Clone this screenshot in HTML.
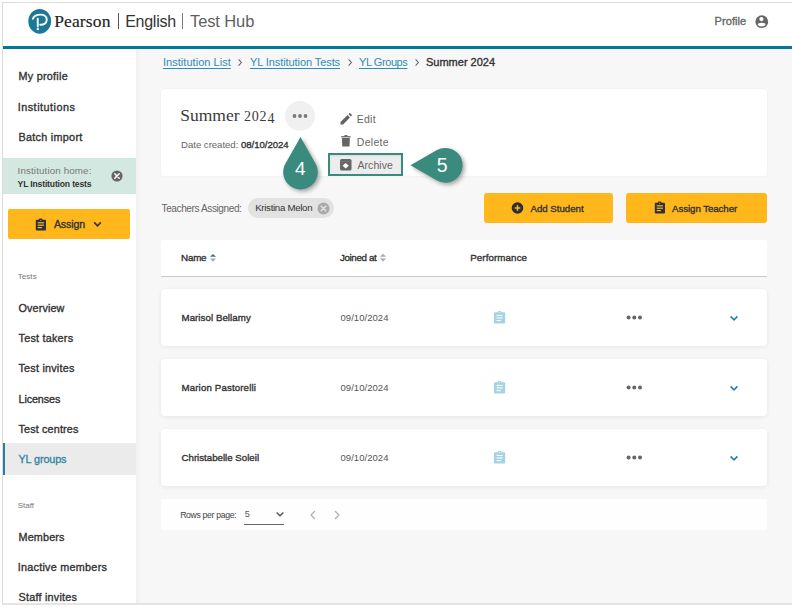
<!DOCTYPE html>
<html><head><meta charset="utf-8">
<style>
*{margin:0;padding:0;box-sizing:border-box}
html,body{width:792px;height:613px;overflow:hidden;background:#fff;font-family:"Liberation Sans",sans-serif;position:relative}
.a{position:absolute;white-space:nowrap}
.t{position:absolute;white-space:nowrap;line-height:1}
.card{position:absolute;background:#fff;border-radius:3px}
.row{position:absolute;left:161px;width:606px;height:57px;background:#fff;border-radius:4px;box-shadow:0 1px 4px rgba(20,20,70,0.08)}
</style></head><body>

<div class="a" style="left:2px;top:2px;width:800px;height:603px;border-left:1px solid #dcdcdc;border-top:1px solid #dcdcdc;border-bottom:2px solid #e4e4e4;background:#fff"></div>
<!-- header -->
<div class="a" style="left:3px;top:46px;width:800px;height:3px;background:#05789a"></div>
<div class="a" style="left:3px;top:49px;width:133px;height:554px;background:#fff"></div>
<div class="a" style="left:136px;top:49px;width:660px;height:554px;background:#f7f7f7"></div>
<div class="a" style="left:136px;top:49px;width:5px;height:554px;background:linear-gradient(90deg,#f0f0f0,#f7f7f7)"></div>

<!-- logo -->
<svg class="a" style="left:27px;top:8px" width="26" height="27" viewBox="0 0 26 27">
<ellipse cx="12.7" cy="13.3" rx="11.4" ry="12.4" fill="#1b7896"/>
<path d="M5.9 10.8 C7.5 5.6 19.8 4.6 19.8 11.5 C19.8 15.8 15.6 17.2 13.2 16.6" fill="none" stroke="#fff" stroke-width="1.9" stroke-linecap="round"/>
<path d="M10.7 10.6 L10.8 18.6" stroke="#fff" stroke-width="1.9" stroke-linecap="round"/>
<circle cx="10.8" cy="21.1" r="1.2" fill="#fff"/>
</svg>
<div class="a" style="left:118px;top:13px;width:1px;height:16px;background:#555"></div>
<div class="a" style="left:182px;top:13px;width:1px;height:16px;background:#777"></div>

<svg class="a" style="left:755px;top:15px" width="14" height="14" viewBox="0 0 14 14">
<circle cx="6.8" cy="6.7" r="6.4" fill="#666"/>
<circle cx="6.4" cy="4.1" r="2.1" fill="#fff"/>
<ellipse cx="6.6" cy="9.6" rx="3.8" ry="1.8" fill="#fff"/>
</svg>


<!-- sidebar -->
<div class="a" style="left:3px;top:158px;width:133px;height:36px;background:#d4e8e2"></div>
<svg class="a" style="left:111px;top:170px" width="12" height="12" viewBox="0 0 12 12">
<circle cx="6" cy="6" r="5.6" fill="#666"/>
<path d="M3.8 3.8 L8.2 8.2 M8.2 3.8 L3.8 8.2" stroke="#fff" stroke-width="1.5" stroke-linecap="round"/>
</svg>
<div class="a" style="left:8px;top:209px;width:122px;height:30px;background:#ffb71b;border-radius:2px"></div>
<svg class="a" style="left:35px;top:217.5px" width="12" height="13" viewBox="0 0 12 13">
<rect x="0.8" y="1.8" width="10.2" height="10.6" rx="0.9" fill="#2e3140"/>
<rect x="3.9" y="0.4" width="3.6" height="2.6" rx="1" fill="#2e3140"/>
<circle cx="5.7" cy="2.2" r="0.55" fill="#ffb71b"/>
<rect x="2.7" y="4.2" width="6.2" height="1.2" fill="#ffb71b"/>
<rect x="2.7" y="6.6" width="6.2" height="1.2" fill="#ffb71b"/>
<rect x="2.7" y="9.0" width="4.2" height="1.2" fill="#ffb71b"/>
</svg>
<svg class="a" style="left:93px;top:221px" width="9" height="7" viewBox="0 0 9 7">
<path d="M1.2 1.4 L4.5 4.8 L7.8 1.4" fill="none" stroke="#333" stroke-width="1.6"/>
</svg>
<div class="a" style="left:3px;top:443px;width:133px;height:32px;background:#ebebeb"></div>
<div class="a" style="left:3px;top:443px;width:2px;height:32px;background:#2a7d9c"></div>

<!-- breadcrumb -->

<!-- title card -->
<div class="card" style="left:161px;top:88.5px;width:606px;height:87.5px;box-shadow:0 0 3px rgba(20,20,70,0.05)"></div>
<div class="a" style="left:285px;top:101px;width:30px;height:30px;border-radius:50%;background:#f0f0f0"></div>
<svg class="a" style="left:291px;top:113px" width="18" height="6" viewBox="0 0 18 6">
<circle cx="3.5" cy="3" r="1.9" fill="#777"/><circle cx="9" cy="3" r="1.9" fill="#777"/><circle cx="14.5" cy="3" r="1.9" fill="#777"/>
</svg>

<svg class="a" style="left:340px;top:112.7px" width="12" height="12" viewBox="0 0 12 12">
<path d="M0.5 9 L0.5 11.5 L3 11.5 L10 4.5 L7.5 2 Z M8.4 1.1 L10.9 3.6 L11.6 2.9 C12 2.5 12 2 11.6 1.6 L10.4 0.4 C10 0 9.5 0 9.1 0.4 Z" fill="#636363"/>
</svg>
<svg class="a" style="left:341px;top:135.4px" width="10" height="12" viewBox="0 0 10 12">
<rect x="0.2" y="1.1" width="9.4" height="1.3" fill="#6a6a6a"/><rect x="3.4" y="0" width="3" height="1.4" rx="0.5" fill="#6a6a6a"/>
<path d="M0.9 3.1 L8.9 3.1 L8.5 11.6 L1.3 11.6 Z" fill="#666"/>
</svg>
<div class="a" style="left:328px;top:153px;width:75px;height:23px;border:2.5px solid #3a8a7e;background:#ededed;box-shadow:inset 0 1px 2px rgba(0,0,0,0.08)"></div>
<svg class="a" style="left:340px;top:158.7px" width="12" height="12" viewBox="0 0 12 12">
<rect x="0" y="0" width="11.5" height="11.6" rx="1.6" fill="#666"/>
<rect x="0.5" y="2.2" width="10.5" height="0.6" fill="#7a7a7a"/>
<path d="M5.7 4.1 L8.8 6.8 L5.7 9.4 L2.6 6.8 Z" fill="#fff"/>
</svg>

<!-- markers -->
<svg class="a" style="left:275px;top:130px;filter:drop-shadow(2px 2px 2px rgba(0,0,0,0.35))" width="50" height="65" viewBox="275 130 50 65">
<path d="M300.5 137 L315.5 163.5 A17.3 17.3 0 1 1 285.5 163.5 Z" fill="#3a8a7e"/>
</svg>
<svg class="a" style="left:405px;top:140px;filter:drop-shadow(2px 2px 2px rgba(0,0,0,0.35))" width="65" height="50" viewBox="405 140 65 50">
<path d="M410.5 165.3 L436.5 150.25 A17.4 17.4 0 1 1 436.5 180.35 Z" fill="#3a8a7e"/>
</svg>

<!-- teachers -->
<div class="a" style="left:248px;top:198px;width:86px;height:20px;border-radius:10px;background:#e2e2e2"></div>
<svg class="a" style="left:317px;top:202px" width="13" height="13" viewBox="0 0 13 13">
<circle cx="6.5" cy="6.5" r="6" fill="#a9a9a9"/>
<path d="M4.2 4.2 L8.8 8.8 M8.8 4.2 L4.2 8.8" stroke="#e2e2e2" stroke-width="1.5" stroke-linecap="round"/>
</svg>
<div class="a" style="left:484px;top:193px;width:129px;height:30px;background:#ffb71b;border-radius:3px"></div>
<svg class="a" style="left:511px;top:202px" width="13" height="13" viewBox="0 0 13 13">
<circle cx="6.5" cy="6" r="5.8" fill="#2b2f3d"/>
<path d="M6.5 3.2 L6.5 8.8 M3.7 6 L9.3 6" stroke="#ffb71b" stroke-width="1.6"/>
</svg>
<div class="a" style="left:626px;top:193px;width:141px;height:30px;background:#ffb71b;border-radius:3px"></div>
<svg class="a" style="left:654px;top:201px" width="12" height="13" viewBox="0 0 12 13">
<rect x="0.8" y="1.8" width="10.2" height="10.6" rx="0.9" fill="#2e3140"/>
<rect x="3.9" y="0.4" width="3.6" height="2.6" rx="1" fill="#2e3140"/>
<circle cx="5.7" cy="2.2" r="0.55" fill="#ffb71b"/>
<rect x="2.7" y="4.2" width="6.2" height="1.2" fill="#ffb71b"/>
<rect x="2.7" y="6.6" width="6.2" height="1.2" fill="#ffb71b"/>
<rect x="2.7" y="9.0" width="4.2" height="1.2" fill="#ffb71b"/>
</svg>

<!-- table header -->
<div class="a" style="left:161px;top:240px;width:606px;height:37px;background:#fff;border-bottom:1px solid #c8c8c8;border-radius:3px 3px 0 0"></div>
<svg class="a" style="left:209px;top:252.5px" width="8" height="10" viewBox="0 0 8 10">
<path d="M1 3.8 L4 0.9 L7 3.8Z" fill="#1f7a9c"/><path d="M1 5.4 L4 8.7 L7 5.4Z" fill="#aaa"/>
</svg>
<svg class="a" style="left:379px;top:253px" width="8" height="10" viewBox="0 0 8 10">
<path d="M0.8 3.8 L4 0.8 L7.2 3.8Z" fill="#aaa"/><path d="M0.8 5.6 L4 8.6 L7.2 5.6Z" fill="#aaa"/>
</svg>

<div class="row" style="top:289px"></div>
<svg class="a" style="left:494px;top:311px" width="12" height="13" viewBox="0 0 12 13">
<rect x="0" y="1.2" width="11.2" height="11.4" rx="1" fill="#a6d3e4"/>
<rect x="3.8" y="0" width="3.6" height="2.4" rx="1" fill="#a6d3e4"/>
<rect x="2.6" y="3.9" width="6" height="1.1" fill="#fff"/>
<rect x="2.6" y="6.4" width="6" height="1.1" fill="#fff"/>
<rect x="2.6" y="9.0" width="4.4" height="1.1" fill="#fff"/><circle cx="5.6" cy="1.6" r="0.5" fill="#fff"/>
</svg>
<svg class="a" style="left:626px;top:315px" width="16" height="5" viewBox="0 0 16 5">
<circle cx="2.6" cy="2.5" r="2" fill="#666"/><circle cx="8.3" cy="2.5" r="2" fill="#666"/><circle cx="14" cy="2.5" r="2" fill="#666"/>
</svg>
<svg class="a" style="left:729px;top:315px" width="10" height="7" viewBox="0 0 10 7">
<path d="M1.6 1.4 L5 4.8 L8.4 1.4" fill="none" stroke="#2580a5" stroke-width="1.6"/>
</svg>

<div class="row" style="top:359px"></div>
<svg class="a" style="left:494px;top:381px" width="12" height="13" viewBox="0 0 12 13">
<rect x="0" y="1.2" width="11.2" height="11.4" rx="1" fill="#a6d3e4"/>
<rect x="3.8" y="0" width="3.6" height="2.4" rx="1" fill="#a6d3e4"/>
<rect x="2.6" y="3.9" width="6" height="1.1" fill="#fff"/>
<rect x="2.6" y="6.4" width="6" height="1.1" fill="#fff"/>
<rect x="2.6" y="9.0" width="4.4" height="1.1" fill="#fff"/><circle cx="5.6" cy="1.6" r="0.5" fill="#fff"/>
</svg>
<svg class="a" style="left:626px;top:385px" width="16" height="5" viewBox="0 0 16 5">
<circle cx="2.6" cy="2.5" r="2" fill="#666"/><circle cx="8.3" cy="2.5" r="2" fill="#666"/><circle cx="14" cy="2.5" r="2" fill="#666"/>
</svg>
<svg class="a" style="left:729px;top:385px" width="10" height="7" viewBox="0 0 10 7">
<path d="M1.6 1.4 L5 4.8 L8.4 1.4" fill="none" stroke="#2580a5" stroke-width="1.6"/>
</svg>

<div class="row" style="top:429px"></div>
<svg class="a" style="left:494px;top:451px" width="12" height="13" viewBox="0 0 12 13">
<rect x="0" y="1.2" width="11.2" height="11.4" rx="1" fill="#a6d3e4"/>
<rect x="3.8" y="0" width="3.6" height="2.4" rx="1" fill="#a6d3e4"/>
<rect x="2.6" y="3.9" width="6" height="1.1" fill="#fff"/>
<rect x="2.6" y="6.4" width="6" height="1.1" fill="#fff"/>
<rect x="2.6" y="9.0" width="4.4" height="1.1" fill="#fff"/><circle cx="5.6" cy="1.6" r="0.5" fill="#fff"/>
</svg>
<svg class="a" style="left:626px;top:455px" width="16" height="5" viewBox="0 0 16 5">
<circle cx="2.6" cy="2.5" r="2" fill="#666"/><circle cx="8.3" cy="2.5" r="2" fill="#666"/><circle cx="14" cy="2.5" r="2" fill="#666"/>
</svg>
<svg class="a" style="left:729px;top:455px" width="10" height="7" viewBox="0 0 10 7">
<path d="M1.6 1.4 L5 4.8 L8.4 1.4" fill="none" stroke="#2580a5" stroke-width="1.6"/>
</svg>

<!-- pagination -->
<div class="a" style="left:161px;top:499px;width:606px;height:31px;background:#fefefe"></div>
<svg class="a" style="left:275px;top:511px" width="10" height="7" viewBox="0 0 10 7">
<path d="M1.6 1.6 L5 4.8 L8.4 1.6" fill="none" stroke="#555" stroke-width="1.4"/>
</svg>
<div class="a" style="left:244px;top:523.5px;width:40px;height:1.3px;background:#666"></div>
<svg class="a" style="left:309px;top:510px" width="8" height="10" viewBox="0 0 8 10">
<path d="M6 1 L2 5 L6 9" fill="none" stroke="#b0b0b0" stroke-width="1.2"/>
</svg>
<svg class="a" style="left:333px;top:510px" width="8" height="10" viewBox="0 0 8 10">
<path d="M2 1 L6 5 L2 9" fill="none" stroke="#b0b0b0" stroke-width="1.2"/>
</svg>
<svg class="a" style="left:237px;top:58px" width="6" height="9" viewBox="0 0 6 9"><path d="M1.6 1.3 L4.4 4.5 L1.6 7.7" fill="none" stroke="#666" stroke-width="1.1"/></svg>
<svg class="a" style="left:347px;top:58px" width="6" height="9" viewBox="0 0 6 9"><path d="M1.6 1.3 L4.4 4.5 L1.6 7.7" fill="none" stroke="#666" stroke-width="1.1"/></svg>
<svg class="a" style="left:414px;top:58px" width="6" height="9" viewBox="0 0 6 9"><path d="M1.6 1.3 L4.4 4.5 L1.6 7.7" fill="none" stroke="#666" stroke-width="1.1"/></svg>

<span class="t" id="pearson" style="left:54.20px;top:12.96px;font-size:17.5px;font-weight:normal;color:#222;font-family:'Liberation Serif',serif;letter-spacing:0.133px;-webkit-text-stroke:0.15px #222">Pearson</span>
<span class="t" id="english" style="left:125.20px;top:13.82px;font-size:16px;font-weight:normal;color:#333;letter-spacing:-0.266px;">English</span>
<span class="t" id="testhub" style="left:190.00px;top:13.23px;font-size:16.5px;font-weight:normal;color:#5f5f5f;letter-spacing:-0.114px;">Test Hub</span>
<span class="t" id="profile" style="left:714.54px;top:16.13px;font-size:11px;font-weight:normal;color:#666;-webkit-text-stroke:0.35px #666;letter-spacing:0.088px;">Profile</span>
<span class="t" id="myprofile" style="left:18.50px;top:71.46px;font-size:10.8px;font-weight:normal;color:#333;-webkit-text-stroke:0.35px #333;letter-spacing:0.267px;">My profile</span>
<span class="t" id="institutions" style="left:17.70px;top:101.56px;font-size:10.8px;font-weight:normal;color:#333;-webkit-text-stroke:0.35px #333;letter-spacing:0.509px;">Institutions</span>
<span class="t" id="batch" style="left:18.50px;top:131.66px;font-size:10.8px;font-weight:normal;color:#333;-webkit-text-stroke:0.35px #333;letter-spacing:0.291px;">Batch import</span>
<span class="t" id="overview" style="left:18.50px;top:303.16px;font-size:10.8px;font-weight:normal;color:#333;-webkit-text-stroke:0.35px #333;letter-spacing:0.129px;">Overview</span>
<span class="t" id="testtakers" style="left:18.50px;top:332.56px;font-size:10.8px;font-weight:normal;color:#333;-webkit-text-stroke:0.35px #333;letter-spacing:0.240px;">Test takers</span>
<span class="t" id="testinvites" style="left:18.50px;top:362.86px;font-size:10.8px;font-weight:normal;color:#333;-webkit-text-stroke:0.35px #333;letter-spacing:0.218px;">Test invites</span>
<span class="t" id="licenses" style="left:18.50px;top:394.26px;font-size:10.8px;font-weight:normal;color:#333;-webkit-text-stroke:0.35px #333;letter-spacing:-0.114px;">Licenses</span>
<span class="t" id="centres" style="left:18.50px;top:423.56px;font-size:10.8px;font-weight:normal;color:#333;-webkit-text-stroke:0.35px #333;letter-spacing:0.146px;">Test centres</span>
<span class="t" id="members" style="left:18.50px;top:531.96px;font-size:10.8px;font-weight:normal;color:#333;-webkit-text-stroke:0.35px #333;letter-spacing:0.168px;">Members</span>
<span class="t" id="inactive" style="left:17.70px;top:561.56px;font-size:10.8px;font-weight:normal;color:#333;-webkit-text-stroke:0.35px #333;letter-spacing:0.267px;">Inactive members</span>
<span class="t" id="staffinv" style="left:18.50px;top:591.56px;font-size:10.8px;font-weight:normal;color:#333;-webkit-text-stroke:0.35px #333;letter-spacing:0.234px;">Staff invites</span>
<span class="t" id="ylgroups" style="left:18.50px;top:453.56px;font-size:10.8px;font-weight:normal;color:#3686a6;-webkit-text-stroke:0.35px #3686a6;letter-spacing:-0.100px;">YL groups</span>
<span class="t" id="insthome" style="left:17.58px;top:166.18px;font-size:9.8px;font-weight:normal;color:#777;letter-spacing:0.120px;">Institution home:</span>
<span class="t" id="ylinst" style="left:17.58px;top:180.08px;font-size:8.6px;font-weight:bold;color:#333;letter-spacing:-0.169px;">YL Institution tests</span>
<span class="t" id="assign" style="left:53.88px;top:218.93px;font-size:10.6px;font-weight:normal;color:#333;-webkit-text-stroke:0.35px #333;letter-spacing:-0.128px;">Assign</span>
<span class="t" id="tests" style="left:17.66px;top:273.03px;font-size:8px;font-weight:normal;color:#777;letter-spacing:0.080px;">Tests</span>
<span class="t" id="staff" style="left:17.66px;top:502.03px;font-size:8px;font-weight:normal;color:#777;">Staff</span>
<span class="t" id="bc1" style="left:163.00px;top:56.99px;font-size:11px;font-weight:normal;color:#2f8db3;letter-spacing:0.034px;text-decoration:underline;text-underline-offset:1.5px">Institution List</span>
<span class="t" id="bc2" style="left:250.00px;top:56.99px;font-size:11px;font-weight:normal;color:#2f8db3;letter-spacing:-0.084px;text-decoration:underline;text-underline-offset:1.5px">YL Institution Tests</span>
<span class="t" id="bc3" style="left:359.00px;top:56.99px;font-size:11px;font-weight:normal;color:#2f8db3;letter-spacing:-0.420px;text-decoration:underline;text-underline-offset:1.5px">YL Groups</span>
<span class="t" id="bc4" style="left:426.00px;top:56.99px;font-size:11px;font-weight:normal;color:#333;-webkit-text-stroke:0.35px #333;">Summer 2024</span>
<span class="t" id="title" style="left:180.20px;top:107.14px;font-size:17.5px;font-weight:normal;color:#3a3a3a;font-family:'Liberation Serif',serif;">Summer <span style="font-size:14px;letter-spacing:0.85px">202<span style="position:relative;top:1.6px">4</span></span></span>
<span class="t" id="date" style="left:181.08px;top:139.95px;font-size:9.6px;font-weight:normal;color:#666;letter-spacing:-0.030px;">Date created: <span style="color:#333;-webkit-text-stroke:0.35px #333">08/10/2024</span></span>
<span class="t" id="edit" style="left:356.74px;top:113.77px;font-size:10.5px;font-weight:normal;color:#666;letter-spacing:0.267px;">Edit</span>
<span class="t" id="delete" style="left:356.74px;top:136.61px;font-size:10.5px;font-weight:normal;color:#666;letter-spacing:0.320px;">Delete</span>
<span class="t" id="archive" style="left:357.54px;top:159.51px;font-size:10.5px;font-weight:normal;color:#666;letter-spacing:0.045px;">Archive</span>
<span class="t" id="m4" style="left:295.00px;top:159.42px;font-size:19px;font-weight:normal;color:#fff;">4</span>
<span class="t" id="m5" style="left:436.66px;top:156.29px;font-size:19.5px;font-weight:normal;color:#fff;">5</span>
<span class="t" id="teachers" style="left:161.54px;top:203.50px;font-size:10px;font-weight:normal;color:#666;letter-spacing:-0.374px;">Teachers Assigned:</span>
<span class="t" id="kristina" style="left:255.20px;top:202.79px;font-size:9.7px;font-weight:normal;color:#333;letter-spacing:-0.308px;">Kristina Melon</span>
<span class="t" id="addstudent" style="left:530.46px;top:203.79px;font-size:9.7px;font-weight:normal;color:#333;-webkit-text-stroke:0.35px #333;letter-spacing:-0.016px;">Add Student</span>
<span class="t" id="assignteacher" style="left:672.00px;top:203.79px;font-size:9.7px;font-weight:normal;color:#333;-webkit-text-stroke:0.35px #333;letter-spacing:-0.062px;">Assign Teacher</span>
<span class="t" id="name" style="left:181.00px;top:252.86px;font-size:9.8px;font-weight:normal;color:#333;-webkit-text-stroke:0.35px #333;letter-spacing:-0.198px;">Name</span>
<span class="t" id="joined" style="left:339.92px;top:252.86px;font-size:9.8px;font-weight:normal;color:#333;-webkit-text-stroke:0.35px #333;letter-spacing:-0.360px;">Joined at</span>
<span class="t" id="perf" style="left:470.20px;top:252.86px;font-size:9.8px;font-weight:normal;color:#333;-webkit-text-stroke:0.35px #333;letter-spacing:0.080px;">Performance</span>
<span class="t" id="n0" style="left:181.50px;top:313.39px;font-size:9.7px;font-weight:normal;color:#333;-webkit-text-stroke:0.35px #333;letter-spacing:0.061px;">Marisol Bellamy</span>
<span class="t" id="d0" style="left:340.50px;top:313.16px;font-size:9.5px;font-weight:normal;color:#555;letter-spacing:0.042px;">09/10/2024</span>
<span class="t" id="n1" style="left:181.50px;top:383.39px;font-size:9.7px;font-weight:normal;color:#333;-webkit-text-stroke:0.35px #333;letter-spacing:0.140px;">Marion Pastorelli</span>
<span class="t" id="d1" style="left:340.50px;top:383.16px;font-size:9.5px;font-weight:normal;color:#555;letter-spacing:0.042px;">09/10/2024</span>
<span class="t" id="n2" style="left:181.50px;top:453.39px;font-size:9.7px;font-weight:normal;color:#333;-webkit-text-stroke:0.35px #333;letter-spacing:0.001px;">Christabelle Soleil</span>
<span class="t" id="d2" style="left:340.50px;top:453.16px;font-size:9.5px;font-weight:normal;color:#555;letter-spacing:0.042px;">09/10/2024</span>
<span class="t" id="rows" style="left:180.16px;top:510.96px;font-size:8.7px;font-weight:normal;color:#444;letter-spacing:-0.335px;">Rows per page:</span>
<span class="t" id="five" style="left:244.66px;top:509.88px;font-size:9px;font-weight:normal;color:#555;">5</span>
</body></html>
